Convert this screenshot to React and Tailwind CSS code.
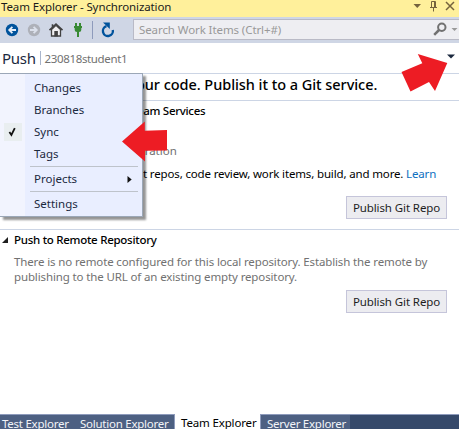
const font = "font-['Noto_Sans','Open_Sans',sans-serif]";

function PublishButton() {
  return (
    <button className="block h-[23px] w-[101px] border border-[#c5c5da] bg-[#ececf0] text-center text-[11.5px] leading-[21px] tracking-[-0.1px] whitespace-nowrap text-[#1e1e1e]">
      Publish Git Repo
    </button>
  );
}

function MenuItem({ children, checked, submenu }) {
  return (
    <div className="flex h-[22px] items-center">
      <div className="flex w-[25px] shrink-0 items-center pl-[4px]">
        {checked && (
          <div className="flex h-[18px] w-[18px] items-center justify-center bg-[#e9eef0]">
            <svg width="9" height="10" viewBox="0 0 9 10" className="-ml-[2px]">
              <path d="M1.4 5 L3.4 8 L6.8 1.2" fill="none" stroke="#111" strokeWidth="1.8" />
            </svg>
          </div>
        )}
      </div>
      <div className="grow pl-[9px] text-[#1b293e]">{children}</div>
      {submenu && (
        <svg width="5" height="7" viewBox="0 0 5 7" className="mr-[10px]">
          <path d="M0.5 0 L4.7 3.5 L0.5 7Z" fill="#111" />
        </svg>
      )}
    </div>
  );
}

function Separator() {
  return <div className="my-[1px] mr-[4px] ml-[30px] h-px bg-[#bec3cb]" />;
}

function Menu() {
  return (
    <div className="absolute top-[73px] left-0 h-[144px] w-[143px] border border-l-0 border-[#9ba7b7] bg-[linear-gradient(to_right,#f2f4fe_25px,#e9eeff_25px)] pt-[3px] text-[11.5px] shadow-[3px_3px_2px_rgba(0,0,0,0.42)]">
      <MenuItem>Changes</MenuItem>
      <MenuItem>Branches</MenuItem>
      <MenuItem checked>Sync</MenuItem>
      <MenuItem>Tags</MenuItem>
      <Separator />
      <MenuItem submenu>Projects</MenuItem>
      <Separator />
      <MenuItem>Settings</MenuItem>
    </div>
  );
}

function Title() {
  return (
    <div className="flex h-[17px] bg-[#fff09b] text-[11.5px] text-[#1b1b1b]">
      <span className="grow pl-px leading-[13px] tracking-[-0.11px] whitespace-nowrap">Team Explorer - Synchronization</span>
      <svg width="46" height="17" viewBox="0 0 46 17" fill="none" stroke="#75633d">
        <path d="M0.5 4 H8 L4.25 8Z" fill="#75633d" stroke="none" />
        <path d="M18.5 7.5 V1.5 H22.5 V7.5 M21.5 1.5 V7.5 M17 7.5 H24 M20.5 8 V11.5" />
        <path d="M33 2 L41 10 M41 2 L33 10" strokeWidth="1.5" />
      </svg>
    </div>
  );
}

function Toolbar() {
  return (
    <div className="flex h-[26px] bg-[#cfd6e5]">
      <svg width="133" height="26" viewBox="0 0 133 26" className="shrink-0">
        <circle cx="12" cy="13" r="6.2" fill="#00539c" />
        <path d="M16 13 H9.5 M12.4 9.8 L9.2 13 L12.4 16.2" fill="none" stroke="#e6edf7" strokeWidth="1.8" />
        <circle cx="34" cy="13" r="6.2" fill="#aeb1b9" />
        <path d="M30 13 H36.5 M33.6 9.8 L36.8 13 L33.6 16.2" fill="none" stroke="#dce1ec" strokeWidth="1.8" />
        <path d="M51.5 12.5 V19 H60.5 V12.5 L56 8.3Z" fill="#f0eff1" stroke="#424242" strokeWidth="1.3" />
        <path d="M49.5 13.2 L56 7 L62.5 13.2 M52.5 10 V7.3" fill="none" stroke="#424242" strokeWidth="1.6" />
        <rect x="54.3" y="14" width="3.6" height="5.5" fill="#424242" />
        <path d="M75 6 H77 V9 H79 V6 H81 V9 H82 V11 H81.3 V13 Q81.3 15 79 15 V20 H77 V15 Q74.7 15 74.7 13 V11 H74 V9 H75Z" fill="#388a34" />
        <path d="M92.5 4 V22" stroke="#8e9bbc" />
        <path d="M106.5 9.2 A5 5 0 1 0 112.8 13" fill="none" stroke="#00539c" strokeWidth="2.4" />
        <path d="M103 5.5 H109.8 V12Z" fill="#00539c" />
      </svg>
      <div className="mt-[2px] flex h-[21px] grow items-center border border-r-0 border-[#b9bac6] bg-[#eeeef2] text-[11.5px] text-[#999]">
        <span className="grow pl-[5px] tracking-[-0.09px] whitespace-nowrap">Search Work Items (Ctrl+#)</span>
        <svg width="26" height="19" viewBox="0 0 26 19">
          <circle cx="8.8" cy="7.3" r="3.7" fill="none" stroke="#717171" strokeWidth="2" />
          <path d="M6 10 L1.2 14.8" stroke="#717171" strokeWidth="2.5" />
          <path d="M18.5 8 H24.5 L21.5 11Z" fill="#999" />
        </svg>
      </div>
    </div>
  );
}

function Tab({ children, className }) {
  return <div className={`h-[15px] shrink-0 bg-[#4d6082] text-[11.5px] leading-[18px] tracking-[-0.25px] whitespace-nowrap text-[#f2f4f8] ${className}`}>{children}</div>;
}

export default function App() {
  return (
    <div className={`relative flex h-[429px] w-[459px] flex-col overflow-hidden bg-white text-black ${font}`}>
      <Title />
      <Toolbar />
      <div className="flex h-[31px] items-center border-b border-[#ccd5e5] pl-[2px] whitespace-nowrap">
        <span className="text-[15px] leading-[20px] tracking-[-0.3px] text-[#1b293e]">Push</span>
        <div className="ml-[4px] h-[14px] w-px bg-[#a9b5cc]" />
        <span className="ml-[4px] grow pt-px text-[11.5px] tracking-[-0.36px] text-[#717171]">230818student1</span>
        <svg width="8" height="5" viewBox="0 0 8 5" className="relative top-[-1px] mr-[4px]">
          <path d="M0 0.5 H8 L4 4.5Z" fill="#1b293e" />
        </svg>
      </div>
      <div className="h-[27px] border-b border-[#ccd5e5] pl-[136px] text-[14.5px] leading-[21px] font-medium tracking-[-0.05px] whitespace-nowrap">
        our code. Publish it to a Git service.
      </div>
      <div className="flex h-[129px] flex-col border-b border-[#ccd5e5] text-[11.5px] whitespace-nowrap">
        <div className="h-[42px] pl-[137px] leading-[20px] font-medium tracking-[-0.3px]">eam Services</div>
        <div className="h-[22px] pl-[132px] leading-[16px] text-[#717171]">istration</div>
        <div className="h-[31px] pl-[143px] leading-[18px] tracking-[-0.15px]">
          t repos, code review, work items, build, and more. <span className="text-[#0e70c0]">Learn</span>
        </div>
        <div className="flex justify-end pr-[12px]"><PublishButton /></div>
      </div>
      <div className="flex h-[185px] flex-col text-[11.5px]">
        <div className="flex h-[24px] pl-[2px] leading-[20px] font-medium whitespace-nowrap">
          <svg width="6" height="6" viewBox="0 0 6 6" className="mt-[7px] mr-[6px]">
            <path d="M6 0 V6 H0Z" fill="#1e1e1e" />
          </svg>
          <span className="tracking-[-0.27px]">Push to Remote Repository</span>
        </div>
        <div className="h-[36px] pl-[14px] leading-[15px] whitespace-nowrap text-[#717171]">
          <p className="tracking-[-0.13px]">
            There is no remote configured for this local repository. Establish the remote by
            <br />
            publishing to the URL of an existing empty repository.
          </p>
        </div>
        <div className="flex justify-end pr-[12px]"><PublishButton /></div>
      </div>
      <div className="flex h-[15px] bg-[#35496a]">
        <Tab className="w-[74px] border-t border-[#8e9bbc] pl-[2px]">Test Explorer</Tab>
        <Tab className="w-[101px] border-t border-r border-[#8e9bbc] pl-[6px]">Solution Explorer</Tab>
        <div className="h-[15px] w-[85px] shrink-0 bg-white pl-[6px] text-[11.5px] leading-[18px] tracking-[-0.15px] whitespace-nowrap">Team Explorer</div>
        <Tab className="w-[90px] border-t border-l border-[#8e9bbc] pl-[6px]">Server Explorer</Tab>
        <div className="grow border-t border-[#8e9bbc]" />
      </div>
      <Menu />
      <svg width="47" height="43" viewBox="0 0 47 43" className="absolute top-[120px] left-[121px]">
        <path d="M1 21.5 L23.8 1.5 V10.8 L46 10 V30.5 L24 30.8 V41.5Z" fill="#ed1c24" />
      </svg>
      <svg width="48" height="40" viewBox="0 0 48 40" className="absolute top-[53px] left-[401px]">
        <path d="M46.3 10 L16.8 1 L21.3 10.3 L0.5 19 L9.5 38.5 L28 29 L34 38Z" fill="#ed1c24" />
      </svg>
    </div>
  );
}
